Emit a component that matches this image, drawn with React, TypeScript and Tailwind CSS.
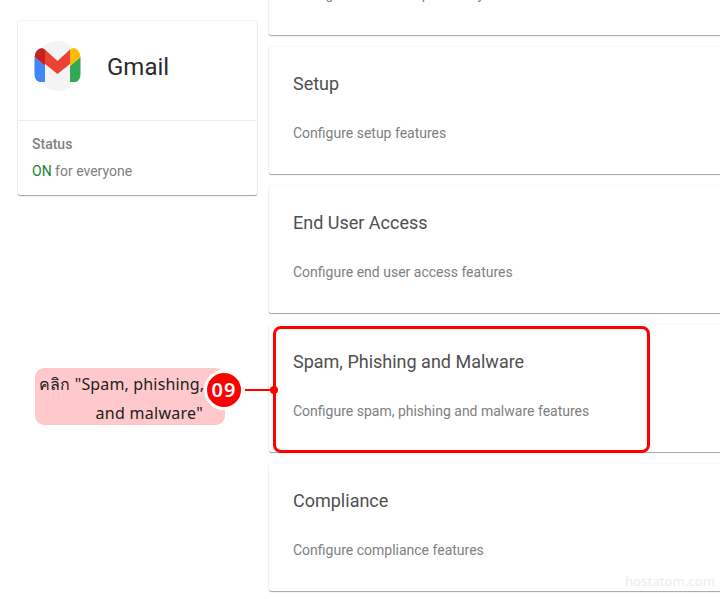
const cards = [
  { title: "", desc: "Configure additional portability" },
  { title: "Setup", desc: "Configure setup features" },
  { title: "End User Access", desc: "Configure end user access features" },
  { title: "Spam, Phishing and Malware", desc: "Configure spam, phishing and malware features", highlighted: true },
  { title: "Compliance", desc: "Configure compliance features" },
];

function GmailLogo() {
  return (
    <svg width="47" height="50" viewBox="34 41 47 50" className="block">
      <ellipse cx="57.5" cy="66" rx="23.5" ry="25" fill="#f4f4f4" />
      <path d="M45 49.5 L42 48 Q39 48 37 50.5 Q34.5 53 34.5 57 L45 66 Z" fill="#c5221f" />
      <polygon points="45,49.5 57.5,61 70,49.5 70,64 57.5,74 45,64" fill="#ea4335" />
      <path d="M34.5 57 L45 66 L45 82 L39 82 Q34.5 80 34.5 74 Z" fill="#4285f4" />
      <path d="M80.5 57 L70 66 L70 82 L76 82 Q80.5 80 80.5 74 Z" fill="#34a853" />
      <path d="M70 49.5 L73 48 Q76 48 78 50.5 Q80.5 53 80.5 57 L70 66 Z" fill="#fbbc04" />
    </svg>
  );
}

export default function App() {
  return (
    <div className="relative flex h-[599px] w-[720px] overflow-hidden bg-white font-['Roboto',sans-serif]">
      <div className="w-[269px] shrink-0 pl-[18px] pr-[12px] pt-[21px]">
        <div className="h-[174px] rounded-[2px] bg-white shadow-[0_1px_1px_rgba(0,0,0,0.35),0_0_2px_rgba(0,0,0,0.14)]">
          <div className="flex h-[100px] items-start border-b border-[#ededed] pl-[16px] pt-[20px]">
            <GmailLogo />
            <div className="ml-[26px] mt-[10px] text-[24px] leading-[32px] text-[#2b2b2b]">Gmail</div>
          </div>
          <div className="pl-[14px] pt-[13px]">
            <div className="text-[14px] font-medium leading-[20px] text-[#808080]">Status</div>
            <div className="mt-[7px] text-[14px] leading-[20px] text-[#808080]">
              <span className="text-[#188038]">ON</span> for everyone
            </div>
          </div>
        </div>
      </div>
      <div className="-mt-[92px] flex min-w-0 flex-1 flex-col gap-[12px]">
        {cards.map((c, i) => (
          <div
            key={i}
            className="relative h-[127px] w-[480px] shrink-0 rounded-[2px] bg-white pl-[24px] pt-[25px] shadow-[0_1px_1px_rgba(0,0,0,0.35),0_0_2px_rgba(0,0,0,0.1)]"
          >
            <div className="h-[24px] text-[18px] leading-[24px] text-[#4f4f4f]">{c.title}</div>
            <div className="mt-[27px] text-[14px] leading-[20px] text-[#808080]">{c.desc}</div>
            {c.highlighted && (
              <div className="absolute left-[4px] top-[1px] h-[127px] w-[377px] rounded-[8px] border-[3px] border-[#ff0000]" />
            )}
          </div>
        ))}
      </div>

      <div className="absolute left-[35px] top-[368px] flex items-start font-['Noto_Sans',sans-serif]">
        <div className="h-[57px] w-[190px] rounded-[9px] bg-[#ffc9cc] pl-[4px] pr-[22px] pt-[2px] text-right text-[16px] leading-[29px] tracking-[0.27px] text-[#212121]">
          <div className="whitespace-nowrap text-left tracking-[0.15px]">คลิก "Spam, phishing,</div>
          <div className="whitespace-nowrap">and malware"</div>
        </div>
        <div className="-ml-[21px] mt-[2px] flex h-[40px] w-[40px] shrink-0 items-center justify-center rounded-full border-[3px] border-white bg-[#ff0000] text-[20px] font-semibold tracking-[1px] text-white">
          09
        </div>
        <div className="ml-[1px] mt-[21px] h-[2px] w-[29px] bg-[#ff0000]" />
        <div className="-ml-[4px] mt-[18px] h-[8px] w-[8px] rounded-full bg-[#ff0000]" />
      </div>
      <div className="absolute right-[5px] top-[572px] font-['Noto_Sans',sans-serif] text-[13px] leading-[18px] tracking-[0.1px] text-[#ececec]">
        hostatom.com
      </div>
    </div>
  );
}
